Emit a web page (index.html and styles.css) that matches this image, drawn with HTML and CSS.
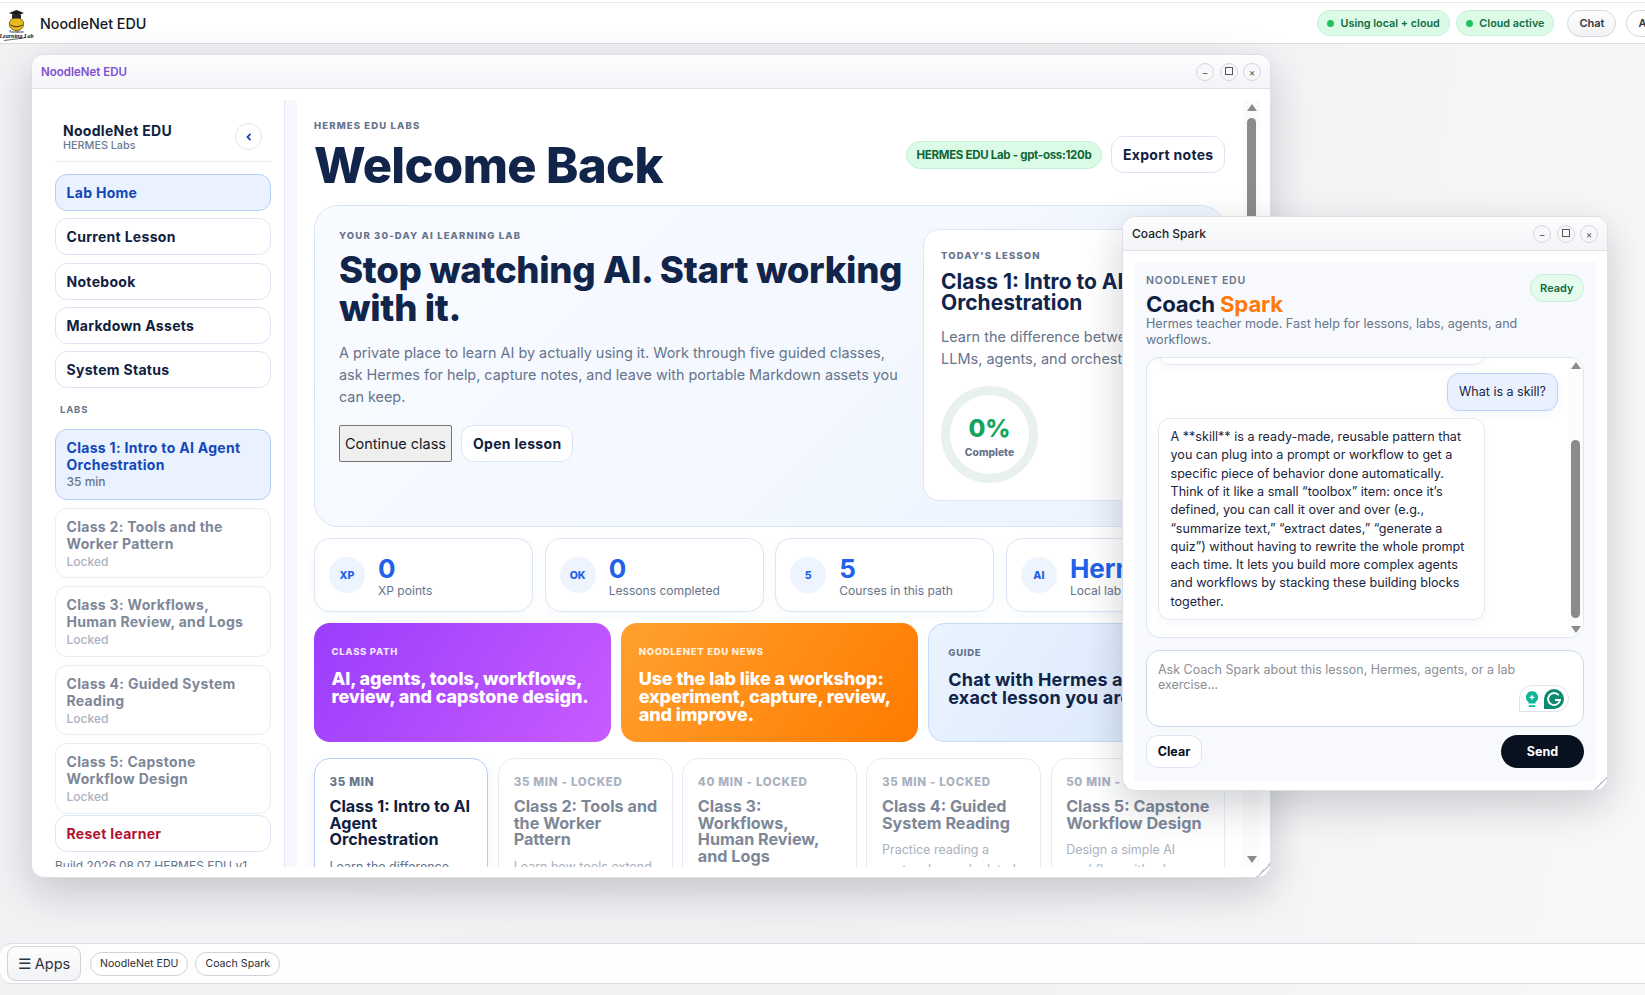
FILE: index.html
```html
<!DOCTYPE html>
<html lang="en">
<head>
<meta charset="utf-8">
<title>NoodleNet EDU</title>
<link rel="stylesheet" href="styles.css">
</head>
<body>
<div class="shell">
  <header class="topbar">
    <div class="brand">
      <svg class="logo" viewBox="0 0 36 40" aria-hidden="true">
        <ellipse cx="16.500" cy="21" rx="7.200" ry="6.600" fill="#e6b91e" stroke="#5a4a10" stroke-width=".8"/>
        <path d="M10.500 22q6 3.500 12 0" fill="none" stroke="#3a300c" stroke-width="1"/>
        <path d="M16.500 7l7.500 3-7.500 3-7.500-3z" fill="#1c1c1c"/>
        <rect x="12" y="11.500" width="9" height="4" fill="#262626"/>
        <text x="16.500" y="30" class="logo-small" text-anchor="middle">Foundation</text>
        <text x="16.500" y="35" class="logo-script" text-anchor="middle">Learning Lab</text>
        <path d="M4 37.500q13-1.500 22-3" fill="none" stroke="#222" stroke-width=".7"/>
      </svg>
      <span class="brand-name">NoodleNet EDU</span>
    </div>
    <div class="top-actions">
      <span class="status-pill"><i class="dot"></i>Using local + cloud</span>
      <span class="status-pill"><i class="dot"></i>Cloud active</span>
      <button class="top-btn">Chat</button>
      <button class="top-btn top-btn-last">Apps</button>
    </div>
  </header>

  <main class="desktop">
    <section class="window window-main">
      <div class="titlebar">
        <span class="title-purple">NoodleNet EDU</span>
        <div class="controls">
          <button class="ctl">&minus;</button><button class="ctl ctl-max"><i></i></button><button class="ctl">&times;</button>
        </div>
      </div>
      <div class="main-body">
        <aside class="sidebar">
          <div class="side-head">
            <div>
              <div class="side-name">NoodleNet EDU</div>
              <div class="side-sub">HERMES Labs</div>
            </div>
            <button class="collapse">
              <svg viewBox="0 0 10 10" width="10" height="10" aria-hidden="true"><path d="M6.500 1.800L3.500 5l3 3.200" fill="none" stroke="#1e40af" stroke-width="1.800"/></svg>
            </button>
          </div>
          <nav class="side-nav">
            <a class="nav-item is-active">Lab Home</a>
            <a class="nav-item">Current Lesson</a>
            <a class="nav-item">Notebook</a>
            <a class="nav-item">Markdown Assets</a>
            <a class="nav-item">System Status</a>
          </nav>
          <div class="side-label">LABS</div>
          <div class="class-list">
            <a class="class-item is-active"><b>Class 1: Intro to AI Agent Orchestration</b><small>35 min</small></a>
            <a class="class-item is-locked"><b>Class 2: Tools and the Worker Pattern</b><small>Locked</small></a>
            <a class="class-item is-locked"><b>Class 3: Workflows, Human Review, and Logs</b><small>Locked</small></a>
            <a class="class-item is-locked"><b>Class 4: Guided System Reading</b><small>Locked</small></a>
            <a class="class-item is-locked"><b>Class 5: Capstone Workflow Design</b><small>Locked</small></a>
          </div>
          <a class="nav-item nav-reset">Reset learner</a>
          <div class="build">Build 2026.08.07 HERMES EDU v1</div>
        </aside>
        <div class="strip"></div>
        <div class="pane">
          <div class="content">
            <div class="page-head">
              <div>
                <div class="eyebrow">HERMES EDU LABS</div>
                <h1>Welcome Back</h1>
              </div>
              <div class="head-actions">
                <span class="model-badge">HERMES EDU Lab - gpt-oss:120b</span>
                <button class="btn-white btn-export">Export notes</button>
              </div>
            </div>

            <section class="hero">
              <div class="hero-copy">
                <div class="eyebrow">YOUR 30-DAY AI LEARNING LAB</div>
                <h2>Stop watching AI. Start working with it.</h2>
                <p>A private place to learn AI by actually using it. Work through five guided classes, ask Hermes for help, capture notes, and leave with portable Markdown assets you can keep.</p>
                <div class="hero-btns">
                  <button class="btn-native">Continue class</button>
                  <button class="btn-white">Open lesson</button>
                </div>
              </div>
              <div class="today">
                <div class="eyebrow">TODAY'S LESSON</div>
                <h3>Class 1: Intro to AI Agent Orchestration</h3>
                <p>Learn the difference between<br>LLMs, agents, and orchestration.</p>
                <div class="ring"><strong>0%</strong><span>Complete</span></div>
              </div>
            </section>

            <section class="stats">
              <div class="stat"><span class="stat-ic">XP</span><div class="stat-text"><div class="stat-val">0</div><div class="stat-lbl">XP points</div></div></div>
              <div class="stat"><span class="stat-ic">OK</span><div class="stat-text"><div class="stat-val">0</div><div class="stat-lbl">Lessons completed</div></div></div>
              <div class="stat"><span class="stat-ic">5</span><div class="stat-text"><div class="stat-val">5</div><div class="stat-lbl">Courses in this path</div></div></div>
              <div class="stat"><span class="stat-ic">AI</span><div class="stat-text"><div class="stat-val">Hermes</div><div class="stat-lbl">Local lab coach</div></div></div>
            </section>

            <section class="promos">
              <div class="promo promo-purple"><div class="promo-kicker">CLASS PATH</div><div class="promo-text">AI, agents, tools, workflows, review, and capstone design.</div></div>
              <div class="promo promo-orange"><div class="promo-kicker">NOODLENET EDU NEWS</div><div class="promo-text">Use the lab like a workshop: experiment, capture, review, and improve.</div></div>
              <div class="promo promo-blue"><div class="promo-kicker">GUIDE</div><div class="promo-text">Chat with Hermes about the exact lesson you are in.</div></div>
            </section>

            <section class="lessons">
              <article class="lesson is-current"><div class="lesson-meta">35 MIN</div><h4>Class 1: Intro to AI Agent Orchestration</h4><p>Learn the difference between LLMs and agents.</p></article>
              <article class="lesson is-locked"><div class="lesson-meta">35 MIN - LOCKED</div><h4>Class 2: Tools and the Worker Pattern</h4><p>Learn how tools extend what agents do.</p></article>
              <article class="lesson is-locked"><div class="lesson-meta">40 MIN - LOCKED</div><h4>Class 3: Workflows, Human Review, and Logs</h4><p>Add review steps to a workflow.</p></article>
              <article class="lesson is-locked"><div class="lesson-meta">35 MIN - LOCKED</div><h4>Class 4: Guided System Reading</h4><p>Practice reading a system log and related files.</p></article>
              <article class="lesson is-locked"><div class="lesson-meta">50 MIN - LOCKED</div><h4>Class 5: Capstone Workflow Design</h4><p>Design a simple AI workflow with a human.</p></article>
            </section>
          </div>
          <div class="scrollbar">
            <i class="arrow-up"></i>
            <i class="thumb thumb-main"></i>
            <i class="arrow-down"></i>
          </div>
        </div>
      </div>
      <i class="resize"></i>
    </section>

    <section class="window window-chat">
      <div class="titlebar titlebar-chat">
        <span class="title-dark">Coach Spark</span>
        <div class="controls">
          <button class="ctl">&minus;</button><button class="ctl ctl-max"><i></i></button><button class="ctl">&times;</button>
        </div>
      </div>
      <div class="chat-body">
        <div class="chat-head">
          <div class="chat-intro">
            <div class="chat-kicker">NOODLENET EDU</div>
            <div class="chat-title">Coach <span>Spark</span></div>
            <div class="chat-desc">Hermes teacher mode. Fast help for lessons, labs, agents, and workflows.</div>
          </div>
          <span class="ready">Ready</span>
        </div>
        <div class="chat-log">
          <div class="messages">
            <div class="bubble-ai bubble-prev"></div>
            <div class="bubble-user">What is a skill?</div>
            <div class="bubble-ai">A **skill** is a ready-made, reusable pattern that you can plug into a prompt or workflow to get a specific piece of behavior done automatically. Think of it like a small “toolbox” item: once it’s defined, you can call it over and over (e.g., “summarize text,” “extract dates,” “generate a quiz”) without having to rewrite the whole prompt each time. It lets you build more complex agents and workflows by stacking these building blocks together.</div>
          </div>
          <div class="scrollbar scrollbar-chat">
            <i class="arrow-up"></i>
            <i class="thumb thumb-chat"></i>
            <i class="arrow-down"></i>
          </div>
        </div>
        <div class="composer">
          <textarea placeholder="Ask Coach Spark about this lesson, Hermes, agents, or a lab exercise..."></textarea>
          <div class="gram">
            <svg viewBox="0 0 16 20" width="14" height="18" aria-hidden="true">
              <path d="M8 1a7 7 0 0 0-4 12.700V15h8v-1.300A7 7 0 0 0 8 1z" fill="#10b497"/>
              <path d="M8 4.500l1 2.500 2.500 1-2.500 1-1 2.500-1-2.500-2.500-1 2.500-1z" fill="#fff"/>
              <rect x="4" y="17" width="8" height="2" rx="1" fill="#10b497"/>
            </svg>
            <svg viewBox="0 0 20 20" width="20" height="20" aria-hidden="true">
              <path d="M10 0a10 10 0 0 1 0 20H0V10A10 10 0 0 1 10 0z" fill="#0d8a6f"/>
              <path d="M14.800 6.300A6 6 0 1 0 16 11h-5" fill="none" stroke="#fff" stroke-width="1.800"/>
            </svg>
          </div>
        </div>
        <div class="chat-actions">
          <button class="btn-clear">Clear</button>
          <button class="btn-send">Send</button>
        </div>
      </div>
      <i class="resize"></i>
    </section>
  </main>

  <footer class="taskbar">
    <button class="apps">&#9776; Apps</button>
    <button class="task">NoodleNet EDU</button>
    <button class="task">Coach Spark</button>
  </footer>
</div>
</body>
</html>
```
FILE: styles.css
```css
* { box-sizing: border-box; }
html, body { margin: 0; height: 100%; overflow: hidden; }
body { font-family: Inter, "Noto Sans", sans-serif; color: #10203f; background: #f1f2f4; }
button { font-family: inherit; cursor: pointer; }
p, h1, h2, h3, h4 { margin: 0; }

.shell { height: 995px; display: flex; flex-direction: column; padding-top: 2px; background: linear-gradient(#fff 2px, transparent 2px), linear-gradient(100deg, #f1f2f4 0%, #f0f1f3 55%, #f8f8f9 100%); }

/* Top bar */
.topbar { flex: none; height: 42px; display: flex; justify-content: space-between; align-items: center; background: #fff; border-top: 1px solid #e9eedd; border-bottom: 1px solid #d9dbdf; overflow: hidden; }
.brand { display: flex; align-items: center; gap: 4px; }
.logo { width: 36px; height: 40px; }
.logo-small { font: 700 2.600px "Liberation Sans", sans-serif; fill: #333; }
.logo-script { font: italic 700 6px "Liberation Serif", serif; fill: #111; }
.brand-name { font-size: 14.300px; font-weight: 500; color: #15181f; }
.top-actions { flex: none; width: 328px; display: flex; align-items: center; gap: 6px; overflow: hidden; }
.status-pill { flex: none; height: 26px; padding: 0 9px; display: inline-flex; align-items: center; gap: 6.500px; border-radius: 13px; background: #dcfbe7; border: 1px solid #c4f0d5; color: #136b3f; font-size: 10.800px; font-weight: 600; white-space: nowrap; }
.dot { width: 7px; height: 7px; border-radius: 50%; background: #1fc25f; }
.top-btn { flex: none; height: 27px; padding: 0 11px; margin-left: 7px; border-radius: 14px; border: 1px solid #d3d6dc; background: linear-gradient(#fff, #f1f2f5); color: #30343c; font-size: 11px; font-weight: 600; }
.top-btn-last { margin-left: 4px; background: #fff; }

/* Desktop */
.desktop { flex: 1; position: relative; min-height: 0; }
.window { position: absolute; background: #fff; border: 1px solid #dcdfe6; border-radius: 13px; box-shadow: 0 14px 40px rgba(20, 24, 40, .2); overflow: hidden; }
.window-main { left: 31px; top: 10px; width: 1240px; height: 824px; }
.window-chat { left: 1122px; top: 172px; width: 486px; height: 575px; }
.titlebar { height: 34px; display: flex; justify-content: space-between; align-items: center; padding: 0 9px 0 9px; background: linear-gradient(#fdfdfe, #f3f4f7); border-bottom: 1px solid #dfe1e6; }
.title-purple { font-size: 11.500px; font-weight: 600; color: #7e4fd0; }
.title-dark { font-size: 12px; font-weight: 500; color: #1a1d24; }
.controls { display: flex; gap: 5.500px; }
.ctl { width: 18px; height: 18px; padding: 0; border-radius: 50%; border: 1px solid #d5d7de; background: #f8f8fa; color: #555; font-size: 10px; line-height: 14px; display: flex; align-items: center; justify-content: center; }
.ctl-max i { width: 8px; height: 8px; border: 1px solid #555; display: block; margin-top: -2px; }
.resize { position: absolute; right: 0; bottom: 0; width: 14px; height: 14px; background: linear-gradient(135deg, transparent 0 50%, #c3c6d6 50% 58%, transparent 58% 72%, #c3c6d6 72% 78%, transparent 78%); }

/* Main window layout */
.main-body { height: 789px; display: flex; padding: 11px 10px 11px 0; }
.sidebar { flex: none; width: 253px; padding: 0 13px 0 23px; border-right: 1px solid #e2e8f3; overflow: hidden; background: #fff; }
.strip { flex: none; width: 12px; background: #f6f8fd; }
.side-head { height: 62px; padding: 23px 9px 0 8px; display: flex; justify-content: space-between; align-items: flex-start; border-bottom: 1px solid #e8ecf3; }
.side-name { font-size: 14px; font-weight: 700; letter-spacing: .3px; color: #0f1f3d; line-height: 15px; }
.side-sub { margin-top: 1px; font-size: 10.800px; font-weight: 500; color: #6b7a93; line-height: 13px; }
.collapse { width: 27px; height: 27px; padding: 0; border-radius: 50%; background: #fff; border: 1px solid #dde5f2; display: flex; align-items: center; justify-content: center; }
.side-nav { margin-top: 12px; display: flex; flex-direction: column; gap: 7.300px; }
.nav-item { display: flex; align-items: center; height: 37px; padding: 0 10.500px; border-radius: 12px; background: #fff; border: 1px solid #dbe5f4; font-size: 14px; font-weight: 700; letter-spacing: .3px; color: #10203f; }
.nav-item.is-active { background: #eaf2ff; border-color: #b4cff5; color: #1248b8; }
.nav-reset { color: #b0122f; }
.side-label { margin: 16px 0 0 5px; height: 25px; font-size: 9.500px; font-weight: 700; letter-spacing: .8px; color: #66748c; line-height: 12px; }
.class-list { display: flex; flex-direction: column; gap: 8px; margin-bottom: 1px; }
.class-item { display: block; height: 70.500px; padding: 9px 20px 0 10.500px; border-radius: 12px; background: #fff; border: 1px solid #dbe5f4; }
.class-item b { display: block; font-size: 14px; font-weight: 700; letter-spacing: .3px; line-height: 17px; color: #10203f; }
.class-item small { display: block; margin-top: 1px; font-size: 12px; font-weight: 500; line-height: 15px; color: #66748c; }
.class-item.is-active { background: #eaf2ff; border-color: #b4cff5; }
.class-item.is-active b { color: #1248b8; }
.class-item.is-locked { border-color: #e8eef7; }
.class-item.is-locked b { color: #7e8798; }
.class-item.is-locked small { margin-top: 2px; color: #a9b1bf; }
.build { margin-top: 6px; font-size: 12px; color: #66748c; white-space: nowrap; line-height: 15px; }

/* Scrolling pane */
.pane { flex: 1; min-width: 0; display: flex; }
.content { flex: 1; min-width: 0; padding: 20px 18px 0 17px; overflow: hidden; }
.scrollbar { flex: none; width: 17px; display: flex; flex-direction: column; align-items: center; background: #fbfbfc; padding: 4px 0; }
.arrow-up, .arrow-down { flex: none; width: 0; height: 0; border-left: 5px solid transparent; border-right: 5px solid transparent; }
.arrow-up { border-bottom: 7px solid #8b8b8b; }
.arrow-down { border-top: 7px solid #8b8b8b; margin-top: auto; }
.thumb { width: 9px; border-radius: 5px; background: #8b8b8b; display: block; }
.thumb-main { height: 260px; margin-top: 7px; }

.page-head { display: flex; justify-content: space-between; align-items: flex-start; height: 85px; }
.eyebrow { font-size: 9.500px; font-weight: 800; letter-spacing: 1.150px; color: #66748c; line-height: 12px; }
h1 { margin: 6px 0 0; font-size: 48.800px; font-weight: 800; line-height: 55px; color: #11244a; letter-spacing: -.6px; }
.head-actions { margin-top: 16px; display: flex; align-items: center; gap: 9px; }
.model-badge { height: 28px; padding: 0 10px; display: flex; align-items: center; border-radius: 14px; background: #dcfbe7; border: 1px solid #c4f0d5; color: #116636; font-size: 11.500px; font-weight: 700; letter-spacing: -.3px; white-space: nowrap; }
.btn-white { height: 37px; padding: 0 11px; border-radius: 12px; background: #fff; border: 1px solid #dbe5f4; color: #10203f; font-size: 14px; font-weight: 700; letter-spacing: .3px; }
.btn-export { padding: 0 10.500px; }

.hero { height: 322px; display: flex; gap: 18px; padding: 24px 0 0 24px; border-radius: 24px; border: 1px solid #d8e5f6; background: linear-gradient(135deg, #f9fbff 0%, #f3f8ff 60%, #e9f2fe 100%); }
.hero-copy { flex: none; width: 566px; }
.hero h2 { margin-top: 9px; font-size: 36.600px; font-weight: 800; line-height: 38px; color: #11244a; letter-spacing: -.3px; }
.hero-copy p { margin-top: 15px; font-size: 14.400px; line-height: 22px; color: #66748c; }
.hero-btns { margin-top: 17px; display: flex; gap: 9px; }
.btn-native { height: 37px; padding: 0; width: 113px; white-space: nowrap; background: #efefef; border: 1px solid #767676; border-radius: 2px; font-size: 14.500px; color: #15181f; }
.today { flex: none; width: 300px; height: 272px; margin-top: -1px; padding: 20px 0 0 17px; background: #fff; border: 1px solid #dde6f3; border-radius: 16px; }
.today h3 { margin-top: 9px; font-size: 21px; font-weight: 700; line-height: 21px; color: #11244a; }
.today p { margin-top: 13px; font-size: 14.500px; line-height: 22px; color: #66748c; white-space: nowrap; }
.ring { margin-top: 16px; width: 97px; height: 97px; border-radius: 50%; border: 9px solid #e8f1ec; display: flex; flex-direction: column; align-items: center; justify-content: center; }
.ring strong { font-size: 24.500px; font-weight: 800; line-height: 26px; color: #16a45f; margin-top: 5px; }
.ring span { margin-top: 5px; font-size: 10.300px; font-weight: 800; line-height: 13px; color: #66748c; }

.stats { margin-top: 11px; display: grid; grid-template-columns: repeat(4, 1fr); gap: 11.500px; }
.stat { height: 74px; display: flex; align-items: center; gap: 13px; padding: 0 14px; background: #fff; border: 1px solid #dbe5f4; border-radius: 16px; box-shadow: 0 4px 12px rgba(60, 90, 150, .04); overflow: hidden; white-space: nowrap; }
.stat-ic { flex: none; width: 36px; height: 36px; border-radius: 50%; background: #eef4fe; color: #2160e8; font-size: 10.500px; font-weight: 800; display: flex; align-items: center; justify-content: center; }
.stat-text { padding-top: 3px; }
.stat-val { font-size: 26px; font-weight: 700; line-height: 28px; color: #2160e8; }
.stat-lbl { font-size: 12.100px; line-height: 16px; color: #66748c; }

.promos { margin-top: 11px; display: grid; grid-template-columns: repeat(3, 1fr); gap: 10.500px; }
.promo { height: 119px; padding: 23px 18px 0 17.500px; border-radius: 16px; color: #fff; overflow: hidden; }
.promo-purple { background: linear-gradient(125deg, #9a3dfc 0%, #c95bff 100%); }
.promo-orange { background: linear-gradient(125deg, #ffa12e 0%, #ff7a00 100%); }
.promo-blue { padding-left: 19px; background: linear-gradient(125deg, #eaf3ff 0%, #d9e8fc 100%); border: 1px solid #c4daf6; color: #11244a; }
.promo-kicker { font-size: 9.500px; font-weight: 800; letter-spacing: .7px; line-height: 12px; opacity: .85; }
.promo-blue .promo-kicker { color: #66748c; opacity: 1; }
.promo-text { margin-top: 12px; font-size: 18px; font-weight: 800; line-height: 18px; letter-spacing: -.1px; }
.promo-blue .promo-text { font-weight: 700; letter-spacing: .15px; }

.lessons { margin-top: 16px; display: grid; grid-template-columns: repeat(5, 1fr); gap: 9.800px; }
.lesson { height: 220px; padding: 16px 13px 0 14.500px; background: #fff; border: 1px solid #e6ecf6; border-radius: 16px; }
.lesson.is-current { border-color: #b4cff5; box-shadow: 0 4px 14px rgba(60, 100, 180, .08); }
.lesson-meta { font-size: 11.500px; font-weight: 800; letter-spacing: .7px; line-height: 14px; color: #66748c; white-space: nowrap; }
.lesson h4 { margin-top: 9px; font-size: 16.200px; font-weight: 700; line-height: 16.500px; color: #10203f; }
.lesson p { margin-top: 9px; font-size: 12.500px; line-height: 20px; color: #66748c; }
.lesson.is-locked .lesson-meta { color: #a9b1bf; }
.lesson.is-locked h4 { color: #7e8798; }
.lesson.is-locked p { color: #a9b1bf; }

/* Chat window */
.chat-body { margin: 11px 11px 0; height: 519px; padding: 0 12px; background: #f7f9fd; }
.chat-head { height: 95px; padding-top: 12px; display: flex; justify-content: space-between; align-items: flex-start; }
.chat-intro { flex: none; width: 378px; }
.chat-kicker { font-size: 10.500px; font-weight: 600; letter-spacing: .8px; line-height: 13px; color: #66748c; }
.chat-title { margin-top: 4px; font-size: 22.200px; font-weight: 700; line-height: 25px; color: #0f1f3d; letter-spacing: -.2px; }
.chat-title span { color: #ff7a0a; }
.chat-desc { font-size: 12.600px; line-height: 15.500px; color: #66748c; }
.ready { flex: none; height: 28px; padding: 0 9.500px; display: flex; align-items: center; border-radius: 14px; background: #e4fbed; border: 1px solid #c4f0d5; color: #136b3f; font-size: 11px; font-weight: 600; }
.chat-log { height: 281px; display: flex; background: #fff; border: 1px solid #dbe5f4; border-radius: 14px; overflow: hidden; }
.messages { flex: 1; min-width: 0; overflow: hidden; display: flex; flex-direction: column; justify-content: flex-end; gap: 7.500px; padding: 0 10px 17px 11px; }
.bubble-ai { flex: none; width: 327px; padding: 9px 11.500px 8px; background: #fff; border: 1px solid #e2e9f4; border-radius: 12px; font-size: 12.600px; line-height: 18.300px; color: #1a2540; box-shadow: 0 3px 8px rgba(60, 90, 150, .05); }
.bubble-prev { height: 24px; }
.bubble-user { flex: none; align-self: flex-end; height: 38px; padding: 0 11px; display: flex; align-items: center; background: #e9f1ff; border: 1px solid #b9d2f7; border-radius: 12px; font-size: 12.500px; color: #1a2540; box-shadow: 0 3px 8px rgba(60, 90, 150, .06); }
.scrollbar-chat { width: 15px; background: #fcfcfd; padding: 4px 0 4px; }
.thumb-chat { margin-top: 71px; height: 178px; }
.composer { position: relative; height: 77px; margin-top: 12px; }
.composer textarea { display: block; width: 100%; height: 100%; padding: 11px 11px; border: 1px solid #cfd9ec; border-radius: 14px; background: #fff; font: 12.500px/15px Inter, sans-serif; resize: none; color: #1a2540; outline: none; }
.composer textarea::placeholder { color: #8a8f98; opacity: 1; }
.gram { position: absolute; right: 15px; top: 35px; width: 50px; height: 27px; display: flex; align-items: center; justify-content: center; gap: 5px; background: #fff; border: 1px solid #dbe2ee; border-radius: 14px 14px 14px 0; }
.chat-actions { margin-top: 8px; display: flex; justify-content: space-between; }
.btn-clear { width: 56px; height: 33px; padding: 0; border-radius: 12px; background: #fff; border: 1px solid #dbe5f4; font-size: 12.500px; font-weight: 700; color: #07101f; }
.btn-send { width: 83px; height: 33px; padding: 0; border-radius: 17px; background: #07111f; border: 0; font-size: 12.500px; font-weight: 700; color: #fff; }

/* Task bar */
.taskbar { flex: none; height: 41px; margin-bottom: 11px; display: flex; align-items: center; gap: 7px; padding-left: 7px; background: #fdfdfe; border: 1px solid #dcdee3; border-left: 0; border-right: 0; border-radius: 12px 0 0 12px; }
.apps { width: 74px; height: 35px; padding: 0; border-radius: 9px; border: 1px solid #cfd2d8; background: linear-gradient(#fdfdfe, #f2f3f5); color: #30343c; font-size: 14.500px; margin-right: 2px; }
.task { height: 24px; padding: 0 9px; border-radius: 12px; border: 1px solid #cfd2d8; background: #fff; color: #2a2e36; font-size: 10.600px; }
```
